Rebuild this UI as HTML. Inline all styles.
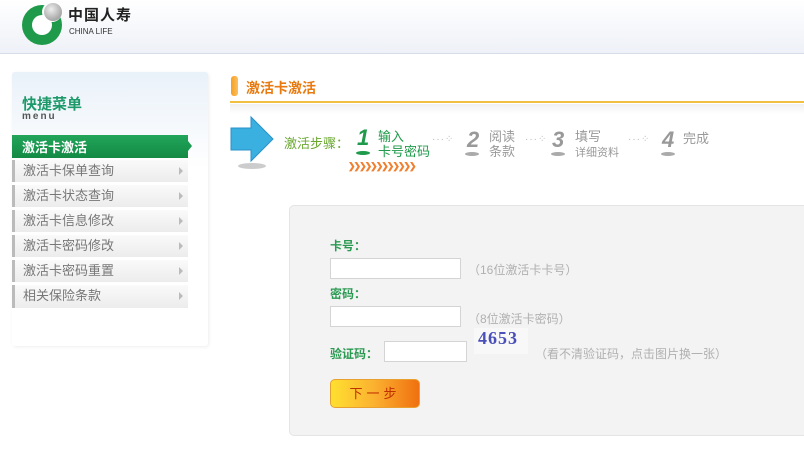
<!DOCTYPE html>
<html><head><meta charset="utf-8"><style>
*{margin:0;padding:0;box-sizing:border-box}
body{width:804px;height:469px;background:#fff;font-family:"Liberation Sans","Noto Sans CJK SC",sans-serif;font-size:12px;position:relative;overflow:hidden}
.a{position:absolute}
.hdr{left:0;top:0;width:804px;height:54px;background:linear-gradient(#fff,#eef1f7);border-bottom:1px solid #d6dde8}
.side{left:12px;top:72px;width:196px;height:274px;background:linear-gradient(#e9f1f9,#fff 35%);border-radius:3px;box-shadow:1px 1px 3px #eee}
.item{position:absolute;left:12px;width:176px;height:22px;background:linear-gradient(#fafafa,#ececec);border-left:3px solid #bbb;color:#777;font-size:13px;line-height:22px;padding-left:8px}
.item:after{content:"";position:absolute;right:5px;top:7px;border:4px solid transparent;border-left:4px solid #bbb;border-right:0}
.g{color:#2a9a52;font-weight:bold;font-size:12px}
input{position:absolute;border:1px solid #d4d4d4;background:#fff;height:21px}
.hint{color:#b0b0b0;font-size:12px}
.num{font-style:italic;font-weight:bold;font-size:22px;color:#999}
.st{color:#999;font-size:13px;line-height:15px}
.dots{color:#bbb;font-size:10px;letter-spacing:1px}
</style></head><body>
<div class="a hdr"></div>
<div class="a" style="left:22px;top:5px;width:40px;height:40px;border-radius:50%;background:#1e9a4a"></div>
<div class="a" style="left:32px;top:15px;width:20px;height:20px;border-radius:50%;background:#fff"></div>
<div class="a" style="left:42px;top:2px;width:20px;height:20px;border-radius:50%;background:#fff"></div>
<div class="a" style="left:44px;top:3px;width:18px;height:18px;border-radius:50%;background:radial-gradient(circle at 40% 35%,#eee,#888)"></div>
<div class="a" style="left:68px;top:7px;font-size:15px;font-weight:bold;color:#222;letter-spacing:1px;line-height:18px">中国人寿</div>
<div class="a" style="left:69px;top:27px;font-size:8px;color:#333;line-height:9px">CHINA LIFE</div>

<div class="a side"></div>
<div class="a" style="left:22px;top:93px;font-size:15px;font-weight:bold;color:#1e9a6a">快捷菜单</div>
<div class="a" style="left:22px;top:111px;font-size:10px;color:#555;font-weight:bold;letter-spacing:2px">menu</div>
<div class="a" style="left:12px;top:135px;width:176px;height:23px;background:linear-gradient(#22a55a,#138a45);color:#fff;font-weight:bold;font-size:13px;line-height:25px;padding-left:10px">激活卡激活</div>
<div class="a" style="left:188px;top:141px;border:5px solid transparent;border-left:4px solid #1a9a50;border-right:0"></div>
<div class="item" style="top:160px">激活卡保单查询</div>
<div class="item" style="top:185px">激活卡状态查询</div>
<div class="item" style="top:210px">激活卡信息修改</div>
<div class="item" style="top:235px">激活卡密码修改</div>
<div class="item" style="top:260px">激活卡密码重置</div>
<div class="item" style="top:285px;height:23px">相关保险条款</div>

<div class="a" style="left:231px;top:76px;width:7px;height:20px;background:linear-gradient(90deg,#f7a020,#fbc060);border-radius:3px"></div>
<div class="a" style="left:246px;top:78px;font-size:14px;font-weight:bold;color:#e87a10">激活卡激活</div>
<div class="a" style="left:230px;top:101px;width:574px;height:2px;background:#f2c040"></div>
<div class="a" style="left:230px;top:104px;width:574px;height:10px;background:linear-gradient(#f0f0f0,#fff)"></div>

<svg class="a" style="left:228px;top:115px" width="48" height="56"><ellipse cx="24" cy="51" rx="14" ry="3" fill="#999" opacity=".5"/><path d="M3 13h20V2l22 22-22 22V35H3z" fill="#3ab0e0" stroke="#2a90c8"/></svg>
<div class="a" style="left:284px;top:133px;color:#6aa830;font-size:13px">激活步骤：</div>
<div class="a num" style="left:357px;top:125px;color:#1e9a4a">1</div>
<div class="a" style="left:356px;top:151px;width:14px;height:4px;border-radius:50%;background:#1e9a4a"></div>
<div class="a st" style="left:378px;top:129px;color:#1e9a4a">输入<br>卡号密码</div>
<div class="a" style="left:348px;top:161px;color:#f08030;font-size:9px;letter-spacing:-2px;font-weight:bold">❯❯❯❯❯❯❯❯❯❯❯❯</div>
<div class="a dots" style="left:432px;top:134px">···⁘</div>
<div class="a num" style="left:467px;top:127px">2</div>
<div class="a" style="left:465px;top:152px;width:14px;height:4px;border-radius:50%;background:#aaa"></div>
<div class="a st" style="left:489px;top:129px">阅读<br>条款</div>
<div class="a dots" style="left:525px;top:134px">···⁘</div>
<div class="a num" style="left:552px;top:127px">3</div>
<div class="a" style="left:551px;top:152px;width:14px;height:4px;border-radius:50%;background:#aaa"></div>
<div class="a st" style="left:575px;top:129px">填写<br><span style="font-size:11px">详细资料</span></div>
<div class="a dots" style="left:628px;top:134px">···⁘</div>
<div class="a num" style="left:662px;top:127px">4</div>
<div class="a" style="left:661px;top:152px;width:14px;height:4px;border-radius:50%;background:#aaa"></div>
<div class="a st" style="left:683px;top:131px">完成</div>

<div class="a" style="left:289px;top:205px;width:530px;height:231px;background:#f3f3f3;border:1px solid #e4e4e4;border-radius:5px"></div>
<div class="a g" style="left:330px;top:237px">卡号：</div>
<input style="left:330px;top:258px;width:131px">
<div class="a hint" style="left:468px;top:261px">（16位激活卡卡号）</div>
<div class="a g" style="left:330px;top:285px">密码：</div>
<input style="left:330px;top:306px;width:131px">
<div class="a hint" style="left:468px;top:310px">（8位激活卡密码）</div>
<div class="a g" style="left:330px;top:345px">验证码：</div>
<input style="left:384px;top:341px;width:83px">
<div class="a" style="left:474px;top:328px;width:54px;height:26px;background:#f8f8f8;color:#4a50b8;font-weight:bold;font-size:18px;padding-left:4px;font-family:'Liberation Serif',serif;letter-spacing:1px">4653</div>
<div class="a hint" style="left:535px;top:345px">（看不清验证码，点击图片换一张）</div>
<div class="a" style="left:330px;top:379px;width:90px;height:29px;border-radius:5px;background:linear-gradient(90deg,#ffe030,#fbb030 50%,#f07010);border:1px solid #e8a030;color:#c03000;font-size:13px;text-align:center;line-height:27px;letter-spacing:4px">下一步</div>
</body></html>
